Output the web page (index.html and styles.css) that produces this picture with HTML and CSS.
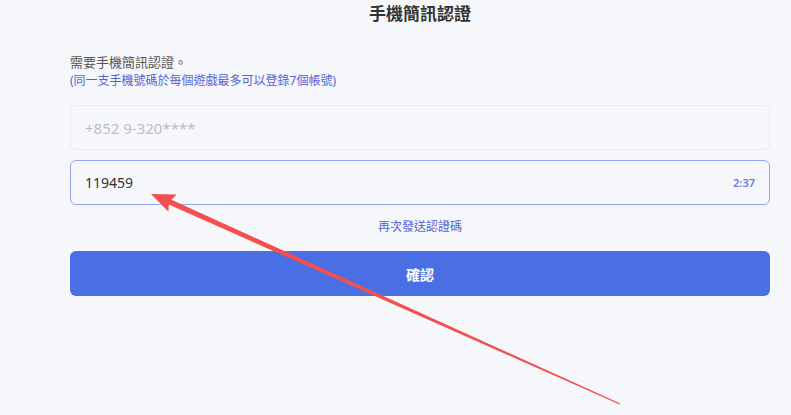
FILE: index.html
```html
<!DOCTYPE html>
<html lang="zh-Hant">
<head>
<meta charset="utf-8">
<link rel="stylesheet" href="styles.css">
</head>
<body>
<div class="page">
  <h1 class="title">手機簡訊認證</h1>
  <p class="desc">需要手機簡訊認證。</p>
  <p class="note">(同一支手機號碼於每個遊戲最多可以登錄7個帳號)</p>
  <div class="field field-disabled"><span class="placeholder">+852 9-320****</span></div>
  <div class="field field-active"><span class="value">119459</span><span class="timer">2:37</span></div>
  <div class="resend">再次發送認證碼</div>
  <button class="confirm">確認</button>
</div>
<svg class="arrow" width="791" height="415" viewBox="0 0 791 415" xmlns="http://www.w3.org/2000/svg">
  <polygon points="151,194 176.5,194.5 171.5,199.8 620.3,403.6 619.7,404.6 168.8,204.6 168.5,211.8" fill="#f44f4f"/>
</svg>
</body>
</html>
```
FILE: styles.css
```css
html, body {
  margin: 0;
  padding: 0;
  background: #f6f7fb;
}
body {
  width: 791px;
  height: 415px;
  overflow: hidden;
  position: relative;
  font-family: "Noto Sans", "Noto Sans CJK TC", sans-serif;
}
.page {
  width: 700px;
  padding-left: 70px;
  display: flex;
  flex-direction: column;
}
.title {
  margin: 0;
  height: 28px;
  line-height: 28px;
  font-size: 17px;
  font-weight: 700;
  color: #333;
  text-align: center;
}
.desc {
  margin: 25px 0 0;
  font-size: 13px;
  line-height: 18px;
  color: #555;
}
.note {
  margin: 1px 0 0;
  font-size: 12px;
  line-height: 18px;
  color: #5463d8;
}
.field {
  box-sizing: border-box;
  height: 45px;
  border-radius: 6px;
  display: flex;
  align-items: center;
  padding: 0 14px;
}
.field-disabled {
  margin-top: 15px;
  border: 1px solid #e9ebf0;
  background: #f6f7fa;
}
.placeholder {
  font-size: 15px;
  color: #bcbec4;
}
.field-active {
  margin-top: 10px;
  border: 1px solid #94a6ef;
  background: #f6f7fb;
  justify-content: space-between;
}
.value {
  font-size: 14px;
  color: #333;
}
.timer {
  font-size: 11px;
  font-weight: 600;
  color: #6a78e4;
}
.resend {
  margin-top: 13px;
  text-align: center;
  font-size: 12px;
  line-height: 18px;
  color: #5563cf;
}
.confirm {
  margin-top: 15px;
  height: 45px;
  border: none;
  border-radius: 6px;
  background: #4a6fe4;
  color: #fff;
  font-family: inherit;
  font-size: 14px;
  font-weight: 700;
  padding: 0;
}
.arrow {
  position: absolute;
  left: 0;
  top: 0;
}
```
